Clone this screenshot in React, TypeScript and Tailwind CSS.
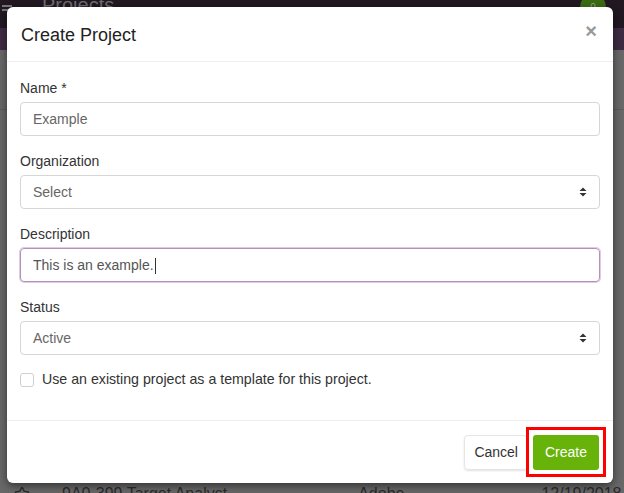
import { Star } from "lucide-react";

const font = { fontFamily: '"Liberation Sans", Arial, sans-serif' };

function SelectArrows() {
  return (
    <svg width="8" height="10" viewBox="0 0 8 10" className="text-[#333]">
      <path d="M4 0.5 L7.5 4 L0.5 4 Z" fill="currentColor" />
      <path d="M4 9.5 L7.5 6 L0.5 6 Z" fill="currentColor" />
    </svg>
  );
}

function Field({ label, children }: { label: string; children: React.ReactNode }) {
  return (
    <div className="flex flex-col">
      <label className="text-[14px] leading-[20px] text-[#333] mb-[4px]">{label}</label>
      {children}
    </div>
  );
}

function Box({ text, select, focused }: { text: string; select?: boolean; focused?: boolean }) {
  return (
    <div
      className={
        focused
          ? "h-[34px] rounded-[4px] border border-[#b48fbf] shadow-[0_0_0_1px_rgba(160,110,175,0.35)] flex items-center px-[12px] text-[14px] text-[#555]"
          : "h-[34px] rounded-[4px] border border-[#d6d6d6] flex items-center justify-between px-[12px] text-[14px] text-[#666]"
      }
    >
      <span>
        {text}
        {focused && <span className="inline-block w-px h-[16px] bg-[#333] align-middle ml-px" />}
      </span>
      {select && <SelectArrows />}
    </div>
  );
}

export default function App() {
  return (
    <div className="relative w-[624px] h-[493px] overflow-hidden bg-[#686868]" style={font}>
      {/* dimmed page behind the modal */}
      <div className="h-[28px] bg-[#211821] flex items-center justify-between pl-[2px] pr-[18px]">
        <div className="flex items-center gap-[30px]">
          <div className="flex flex-col gap-[2px] -mt-[12px]">
            <div className="w-[10px] h-[2px] bg-[#777]" />
            <div className="w-[10px] h-[2px] bg-[#777]" />
          </div>
          <span className="text-[20px] text-[#6f6a6f] -mt-[18px] whitespace-nowrap">Projects</span>
        </div>
        <div className="w-[26px] h-[26px] rounded-full bg-[#3d6b14] -mt-[14px] flex items-center justify-center text-[10px] text-[#8a8]">
          0
        </div>
      </div>
      <div className="h-[22px] bg-[#3e2c42]" />
      <div className="h-[60px] border-b border-[#5c5c5c]" />
      <div className="absolute left-0 right-0 top-[482px] flex items-center text-[16px] text-[#2b2b2b] whitespace-nowrap">
        <Star size={16} className="ml-[14px] shrink-0 text-[#2b2b2b]" />
        <span className="ml-[32px] shrink-0">9A0-399 Target Analyst</span>
        <span className="ml-[131px] shrink-0">Adobe</span>
        <span className="ml-[137px] shrink-0">12/19/2018</span>
      </div>

      {/* modal */}
      <div className="absolute left-[7px] top-[7px] w-[606px] h-[476px] bg-white rounded-[6px] shadow-[0_3px_9px_rgba(0,0,0,0.5)] flex flex-col">
        <div className="h-[55px] border-b border-[#eeeeee] flex items-center justify-between pl-[14px] pr-[16px]">
          <h4 className="text-[18px] text-[#222] pt-[2px]">Create Project</h4>
          <span className="text-[20px] font-bold text-[#999] leading-none -mt-[6px]">×</span>
        </div>
        <div className="flex-1 px-[13px] pt-[16px] flex flex-col gap-[15px]">
          <Field label="Name *">
            <Box text="Example" />
          </Field>
          <Field label="Organization">
            <Box text="Select" select />
          </Field>
          <Field label="Description">
            <Box text="This is an example." focused />
          </Field>
          <Field label="Status">
            <Box text="Active" select />
          </Field>
          <div className="flex items-center gap-[8px] mt-[-1px]">
            <div className="w-[14px] h-[14px] rounded-[3px] border border-[#cfcfcf]" />
            <span className="text-[14.2px] text-[#333]">Use an existing project as a template for this project.</span>
          </div>
        </div>
        <div className="h-[63px] border-t border-[#eeeeee] flex items-center justify-end pr-[14px] gap-[5px]">
          <div className="h-[35px] px-[9px] rounded-[4px] border border-[#e6e6e6] shadow-[0_1px_2px_rgba(0,0,0,0.12)] flex items-center text-[14px] text-[#333]">
            Cancel
          </div>
          <div className="relative">
            <div className="h-[35px] px-[12px] rounded-[3px] bg-[#68b30a] flex items-center text-[14px] text-white">
              Create
            </div>
            <div className="absolute -left-[7px] -top-[8px] -right-[7px] -bottom-[7px] border-[3px] border-[#ff0000]" />
          </div>
        </div>
      </div>
    </div>
  );
}
